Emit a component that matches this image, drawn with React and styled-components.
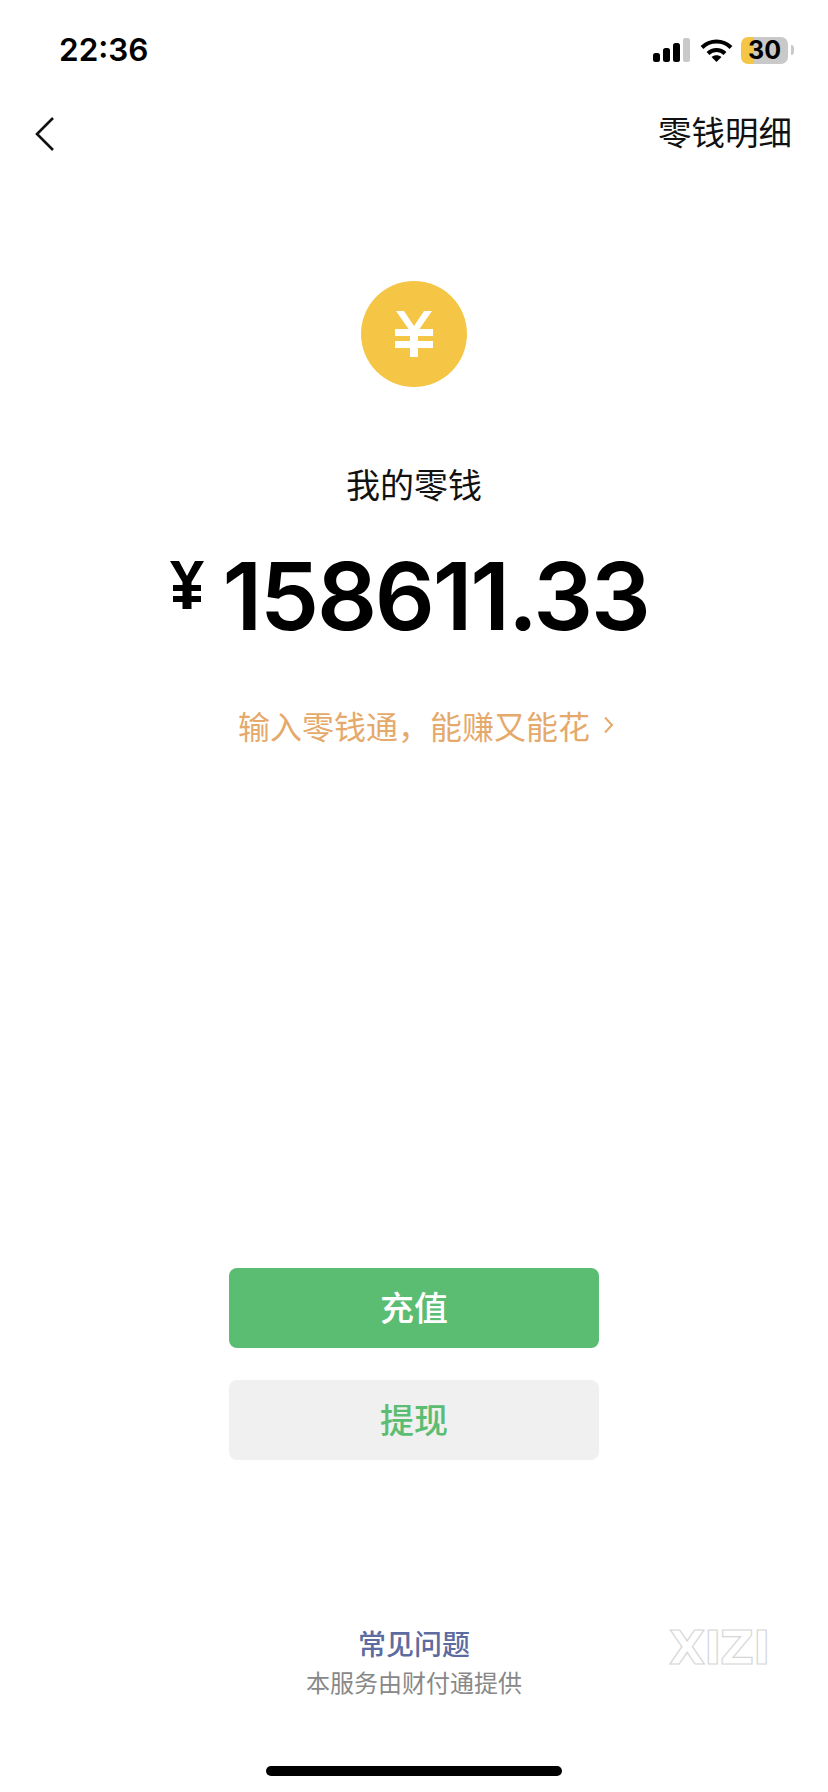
import React from "react";
import styled, { createGlobalStyle } from "styled-components";

const Global = createGlobalStyle`
  html, body { margin: 0; padding: 0; background: #fff; }
  body { font-family: "Noto Sans CJK SC", "Liberation Sans", sans-serif; }
  * { box-sizing: border-box; }
`;

const Page = styled.div`
  position: relative;
  width: 828px;
  height: 1792px;
  display: flex;
  flex-direction: column;
  align-items: center;
  background: #fff;
  overflow: hidden;
`;

const StatusBar = styled.div`
  width: 100%;
  height: 100px;
  padding: 30px 34px 0 59px;
  display: flex;
  justify-content: space-between;
  align-items: flex-start;
`;

const Time = styled.div`
  font-family: "Inter", "Liberation Sans", sans-serif;
  font-size: 31.5px;
  line-height: 40px;
  font-weight: 600;
  color: #000;
`;

const StatusIcons = styled.div`
  display: flex;
  align-items: center;
  height: 40px;
`;

const Signal = styled.svg`
  width: 37px;
  height: 24px;
  margin-right: 10px;
`;

const Wifi = styled.svg`
  width: 33px;
  height: 24px;
  margin-right: 8px;
`;

const Battery = styled.div`
  width: 47px;
  height: 27px;
  border-radius: 7px;
  background: linear-gradient(90deg, ${p => p.$fill} 0 ${p => p.$level}%, #c9c9c9 ${p => p.$level}% 100%);
  font-family: "Inter", "Liberation Sans", sans-serif;
  font-size: 25px;
  line-height: 27px;
  font-weight: 700;
  text-align: center;
  color: #000;
`;

const BatteryNub = styled.div`
  width: 3px;
  height: 10px;
  margin-left: 3px;
  border-radius: 0 4px 4px 0;
  background: #c9c9c9;
`;

const NavBar = styled.div`
  width: 100%;
  height: 68px;
  padding: 0 36px 0 34px;
  display: flex;
  justify-content: space-between;
  align-items: center;
`;

const BackIcon = styled.svg`
  width: 22px;
  height: 36px;
`;

const NavAction = styled.div`
  margin-bottom: 6px;
  font-size: 33.5px;
  line-height: 44px;
  color: #111;
`;

const Coin = styled.div`
  width: 106px;
  height: 106px;
  margin-top: 113px;
  border-radius: 50%;
  background: #f5c545;
  display: flex;
  align-items: center;
  justify-content: center;
`;

const Label = styled.div`
  margin-top: 73px;
  font-size: 34px;
  line-height: 48px;
  color: #111;
`;

const Amount = styled.div`
  margin-top: 36px;
  margin-right: 9px;
  height: 104px;
  display: flex;
  align-items: flex-start;
  color: #000;
  font-family: "Inter", "Liberation Sans", sans-serif;
`;

const Currency = styled.svg`
  width: 34px;
  height: 48px;
  margin-top: 17px;
  margin-right: 18px;
`;

const Digits = styled.div`
  font-size: 94px;
  line-height: 104px;
  font-weight: 560;
  letter-spacing: -2.2px;
`;

const Promo = styled.div`
  margin-top: 54px;
  padding-left: 24px;
  display: flex;
  align-items: center;
  gap: 13px;
  font-size: 32px;
  line-height: 46px;
  color: #e5a96b;
`;

const PromoArrow = styled.svg`
  width: 11px;
  height: 18px;
`;

const Actions = styled.div`
  margin-top: 520px;
  display: flex;
  flex-direction: column;
  gap: 32px;
`;

const ActionButton = styled.div`
  width: 370px;
  height: 80px;
  padding-bottom: 4px;
  border-radius: 8px;
  display: flex;
  align-items: center;
  justify-content: center;
  font-size: 34px;
  font-weight: 500;
  background: ${p => (p.$primary ? "#5bbd72" : "#f0f0f0")};
  color: ${p => (p.$primary ? "#fff" : "#5bbd72")};
`;

const Faq = styled.div`
  margin-top: 163px;
  font-size: 28px;
  line-height: 40px;
  font-weight: 500;
  color: #5d6ba1;
`;

const Provider = styled.div`
  margin-top: 2px;
  font-size: 24px;
  line-height: 34px;
  color: #888;
`;

const Watermark = styled.div`
  position: absolute;
  left: 669px;
  top: 1624px;
  font-family: "DejaVu Sans", sans-serif;
  font-size: 47px;
  line-height: 48px;
  font-weight: 700;
  letter-spacing: -1.3px;
  color: #fff;
  -webkit-text-stroke: 1.2px #d6d6d6;
`;

const HomeIndicator = styled.div`
  position: absolute;
  left: 266px;
  top: 1766px;
  width: 296px;
  height: 10px;
  border-radius: 5px;
  background: #000;
`;

export default function App() {
  return (
    <Page>
      <Global />
      <StatusBar>
        <Time>22:36</Time>
        <StatusIcons>
          <Signal viewBox="0 0 37 24">
            <rect x="0" y="15" width="7" height="9" rx="2.5" fill="#000" />
            <rect x="10" y="10" width="7" height="14" rx="2.5" fill="#000" />
            <rect x="20" y="5" width="7" height="19" rx="2.5" fill="#000" />
            <rect x="30" y="0" width="7" height="24" rx="2" fill="#c9c9c9" />
          </Signal>
          <Wifi viewBox="0 0 33 24" fill="none" stroke="#000" strokeWidth="4">
            <path d="M2 9.5C10 1.5 23 1.5 31 9.5" />
            <path d="M8 15.5C12.8 10.8 20.2 10.8 25 15.5" />
            <path d="M16.5 24L11.5 19C14.5 16.6 18.5 16.6 21.5 19Z" fill="#000" stroke="none" />
          </Wifi>
          <Battery $fill="#f5c545" $level={27}>30</Battery>
          <BatteryNub />
        </StatusIcons>
      </StatusBar>
      <NavBar>
        <BackIcon viewBox="0 0 22 36" fill="none" stroke="#111" strokeWidth="2.6">
          <path d="M19 2L3 18L19 34" />
        </BackIcon>
        <NavAction>零钱明细</NavAction>
      </NavBar>
      <Coin>
        <svg width="38" height="46" viewBox="0 0 38 46" fill="#fff">
          <path d="M1 0H9L19 15L29 0H37L23 20V46H15V20Z" />
          <rect x="0" y="18" width="38" height="7" />
          <rect x="0" y="30" width="38" height="7" />
        </svg>
      </Coin>
      <Label>我的零钱</Label>
      <Amount>
        <Currency viewBox="0 0 34 48" fill="#000">
          <path d="M0 0H9L17 15L25 0H34L21.5 21V48H12.5V21Z" />
          <rect x="3" y="24" width="28" height="6" />
          <rect x="3" y="35" width="28" height="6" />
        </Currency>
        <Digits>158611.33</Digits>
      </Amount>
      <Promo>
        <span>{"输入零钱通\uFF0C能赚又能花"}</span>
        <PromoArrow viewBox="0 0 11 18" fill="none" stroke="#e5a96b" strokeWidth="2">
          <path d="M2 1.5L9 9L2 16.5" />
        </PromoArrow>
      </Promo>
      <Actions>
        <ActionButton $primary>充值</ActionButton>
        <ActionButton>提现</ActionButton>
      </Actions>
      <Faq>常见问题</Faq>
      <Provider>本服务由财付通提供</Provider>
      <Watermark>XIZI</Watermark>
      <HomeIndicator />
    </Page>
  );
}
